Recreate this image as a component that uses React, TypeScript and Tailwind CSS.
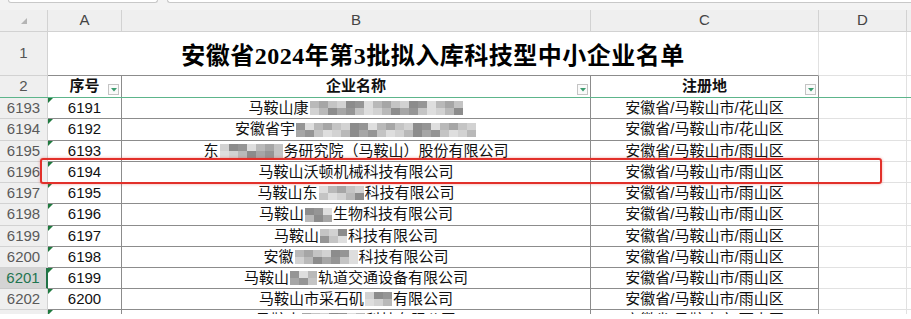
import React from "react";

type Row = {
  r: number;
  n: string;
  pre: string;
  blur: number;
  post: string;
  area: string;
};

const rows: Row[] = [
  { r: 6193, n: "6191", pre: "马鞍山康", blur: 17, post: "", area: "花山区" },
  { r: 6194, n: "6192", pre: "安徽省宇", blur: 20, post: "", area: "花山区" },
  { r: 6195, n: "6193", pre: "东", blur: 7, post: "务研究院（马鞍山）股份有限公司", area: "雨山区" },
  { r: 6196, n: "6194", pre: "马鞍山沃顿机械科技有限公司", blur: 0, post: "", area: "雨山区" },
  { r: 6197, n: "6195", pre: "马鞍山东", blur: 5, post: "科技有限公司", area: "雨山区" },
  { r: 6198, n: "6196", pre: "马鞍山", blur: 3, post: "生物科技有限公司", area: "雨山区" },
  { r: 6199, n: "6197", pre: "马鞍山", blur: 3, post: "科技有限公司", area: "雨山区" },
  { r: 6200, n: "6198", pre: "安徽", blur: 7, post: "科技有限公司", area: "雨山区" },
  { r: 6201, n: "6199", pre: "马鞍山", blur: 3, post: "轨道交通设备有限公司", area: "雨山区" },
  { r: 6202, n: "6200", pre: "马鞍山市采石矶", blur: 3, post: "有限公司", area: "雨山区" },
  { r: 6203, n: "6201", pre: "马鞍山", blur: 7, post: "科技有限公司", area: "雨山区" },
];

// row heights (incl. bottom border) so lines land on the same pixels as the sheet
const heights = [
  "h-[21px]",
  "h-[22px]",
  "h-[21px]",
  "h-[21px]",
  "h-[21px]",
  "h-[22px]",
  "h-[21px]",
  "h-[21px]",
  "h-[21px]",
  "h-[21px]",
  "h-[21px]",
];

const tones = [
  "bg-[#b9b9b9]",
  "bg-[#959595]",
  "bg-[#d2d2d2]",
  "bg-[#a6a6a6]",
  "bg-[#dedede]",
  "bg-[#8c8c8c]",
  "bg-[#c4c4c4]",
];

function Mosaic({ count, seed }: { count: number; seed: number }) {
  return (
    <span className="inline-flex flex-col h-[14px] mx-[1px] blur-[0.6px]">
      <span className="flex h-[7px]">
        {Array.from({ length: count }).map((_, j) => (
          <span key={j} className={"w-[9px] h-full " + tones[(j * 3 + seed) % tones.length]} />
        ))}
      </span>
      <span className="flex h-[7px]">
        {Array.from({ length: count }).map((_, j) => (
          <span key={j} className={"w-[9px] h-full " + tones[(j * 5 + seed + 2) % tones.length]} />
        ))}
      </span>
    </span>
  );
}

function Filter() {
  return (
    <span className="absolute right-[2px] bottom-[2px] w-[11px] h-[11px] border border-[#c4c4c4] bg-[#fafafa] flex items-center justify-center">
      <svg width="6" height="4" viewBox="0 0 6 4">
        <polygon points="0,0 6,0 3,3.5" fill="#3d9c6f" />
      </svg>
    </span>
  );
}

function Flag() {
  return (
    <svg className="absolute left-0 top-0" width="5" height="5" viewBox="0 0 5 5">
      <polygon points="0,0 5,0 0,5" fill="#1f7a3f" />
    </svg>
  );
}

export default function App() {
  return (
    <div className="relative w-[911px] h-[319px] overflow-hidden bg-white font-['Liberation_Sans','Noto_Sans_CJK_SC',sans-serif] text-[15px] text-[#111]">
      {/* name box / formula bar bottoms */}
      <div className="flex h-[10px] bg-[#f3f3f3]">
        <div className="ml-[8px] w-[150px] h-[3px] bg-white border border-t-0 border-[#c8c8c8] rounded-b-[4px]" />
        <div className="ml-[9px] flex-1 h-[3px] bg-white border border-t-0 border-r-0 border-[#c8c8c8] rounded-bl-[4px]" />
      </div>

      {/* column letters */}
      <div className="flex h-[22px] bg-[#efefef] border-b border-[#d2d2d2] text-[#444]">
        <div className="w-[48px] border-r border-[#d2d2d2] flex items-center justify-center">
          <svg width="6" height="6" viewBox="0 0 6 6">
            <polygon points="6,0 6,6 0,6" fill="#b4b4b4" />
          </svg>
        </div>
        <div className="w-[74px] border-r border-[#d2d2d2] flex items-center justify-center">A</div>
        <div className="w-[469px] border-r border-[#d2d2d2] flex items-center justify-center">B</div>
        <div className="w-[228px] border-r border-[#d2d2d2] flex items-center justify-center">C</div>
        <div className="w-[88px] border-r border-[#d2d2d2] flex items-center justify-center">D</div>
        <div className="flex-1" />
      </div>

      {/* row 1: title */}
      <div className="flex h-[44px]">
        <div className="w-[48px] bg-[#efefef] border-r border-b border-[#d2d2d2] flex items-center justify-center text-[#555]">
          1
        </div>
        <div className="w-[771px] border-r border-[#e1e1e1] border-b border-b-[#8c8c8c] flex items-center justify-center pt-[5px] font-['Liberation_Serif','Noto_Sans_CJK_SC',serif] font-bold text-[24px] tracking-[0.5px] text-black">
          安徽省2024年第3批拟入库科技型中小企业名单
        </div>
        <div className="w-[88px] border-r border-b border-[#e1e1e1]" />
        <div className="flex-1 border-b border-[#e1e1e1]" />
      </div>

      {/* row 2: headers */}
      <div className="flex h-[22px] border-b border-[#5db58b]">
        <div className="w-[48px] bg-[#efefef] border-r border-[#d2d2d2] flex items-center justify-center text-[#555]">
          2
        </div>
        <div className="relative w-[74px] border-r border-[#8c8c8c] flex items-center justify-center font-bold">
          序号
          <Filter />
        </div>
        <div className="relative w-[469px] border-r border-[#8c8c8c] flex items-center justify-center font-bold">
          企业名称
          <Filter />
        </div>
        <div className="relative w-[228px] border-r border-[#8c8c8c] flex items-center justify-center font-bold">
          注册地
          <Filter />
        </div>
        <div className="w-[88px] border-r border-[#e1e1e1]" />
        <div className="flex-1" />
      </div>

      {rows.map((row, i) => {
        const selected = row.r === 6201;
        return (
          <div key={row.r} className={"flex " + heights[i]}>
            <div
              className={
                selected
                  ? "w-[48px] bg-[#d4d4d4] border-r-2 border-r-[#217346] border-b border-b-[#c8c8c8] flex items-center justify-center text-[#1f7550]"
                  : "w-[48px] bg-[#efefef] border-r border-b border-[#d2d2d2] flex items-center justify-center text-[#5a5a5a]"
              }
            >
              {row.r}
            </div>
            <div className="relative w-[74px] border-r border-b border-[#8c8c8c] flex items-center justify-center">
              <Flag />
              {row.n}
            </div>
            <div className="w-[469px] border-r border-b border-[#8c8c8c] flex items-center justify-center whitespace-nowrap">
              {row.pre}
              {row.blur > 0 && <Mosaic count={row.blur} seed={i} />}
              {row.post}
            </div>
            <div className="w-[228px] border-r border-b border-[#8c8c8c] flex items-center justify-center whitespace-nowrap">
              安徽省/马鞍山市/{row.area}
            </div>
            <div className="w-[88px] border-r border-b border-[#e1e1e1]" />
            <div className="flex-1 border-b border-[#e1e1e1]" />
          </div>
        );
      })}

      {/* white band where the capture ends */}
      <div className="absolute left-0 right-0 top-[314px] h-[5px] bg-white" />

      {/* red highlight round row 6196 */}
      <div className="absolute left-[40px] top-[158px] w-[842px] h-[26px] border-2 border-[#e2302a] rounded-[3px] shadow-[0_0_3px_rgba(226,48,42,0.45)]" />
    </div>
  );
}
